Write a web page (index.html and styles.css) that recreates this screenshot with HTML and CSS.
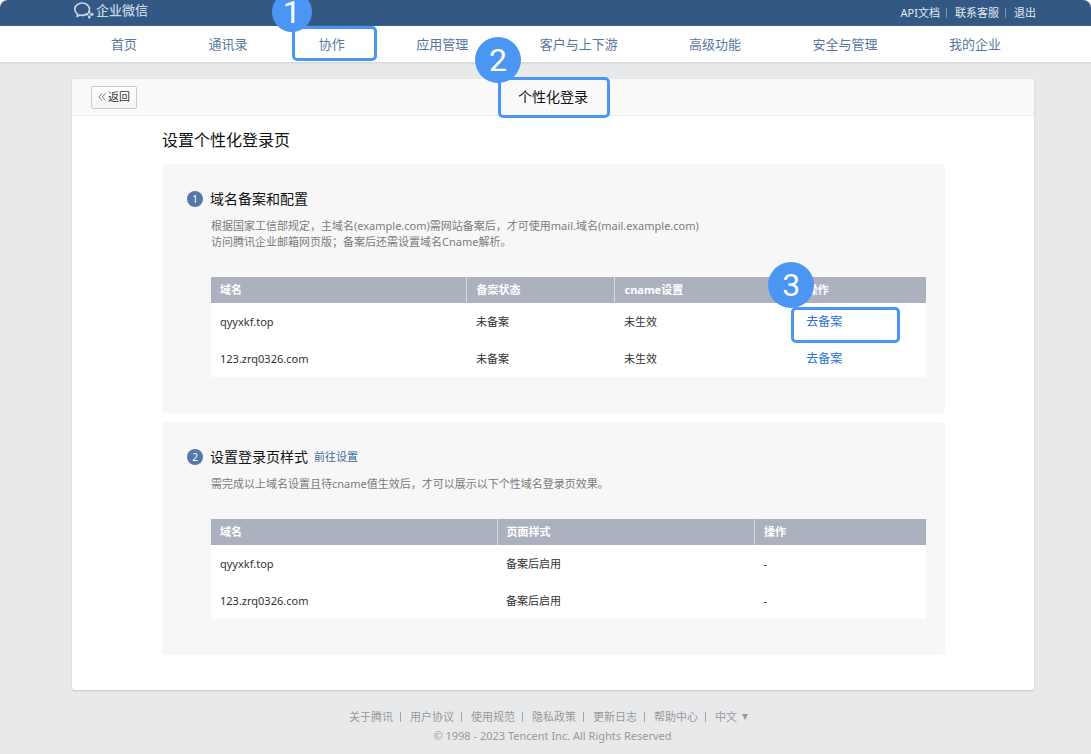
FILE: index.html
```html
<!DOCTYPE html>
<html lang="zh-CN">
<head>
<meta charset="utf-8">
<meta name="viewport" content="width=device-width, initial-scale=1">
<title>个性化登录</title>
<link rel="stylesheet" href="styles.css">
</head>
<body>
<div class="page">
  <header class="topbar">
    <a class="brand" href="#">
      <svg class="brand-icon" viewBox="0 0 22 18" aria-hidden="true">
        <path d="M16.5 8.4C16.4 4.6 13.2 2 9.2 2 5.100 2 1.800 4.800 1.800 8.200c0 2 1 3.600 2.700 4.800L4.100 15.400l2.700-1.400c1.700.5 3.500.5 5-.1" fill="none" stroke="currentColor" stroke-width="1.700" stroke-linecap="round" stroke-linejoin="round"/>
        <g fill="currentColor"><ellipse cx="16.200" cy="10.900" rx="1.300" ry="1.800"/><ellipse cx="18.900" cy="13.400" rx="1.800" ry="1.300"/><ellipse cx="16.300" cy="16" rx="1.300" ry="1.800"/><ellipse cx="13.700" cy="13.300" rx="1.800" ry="1.300"/></g>
      </svg>
      <span>企业微信</span>
    </a>
    <nav class="account" aria-label="账号">
      <a href="#">API文档</a><i class="bar"></i><a href="#">联系客服</a><i class="bar"></i><a href="#">退出</a>
    </nav>
  </header>
  <nav class="mainnav" aria-label="主导航">
    <a href="#">首页</a>
    <a href="#">通讯录</a>
    <a href="#" class="marked">协作<span class="frame frame-nav"><b class="badge badge-small">1</b></span></a>
    <a href="#">应用管理</a>
    <a href="#">客户与上下游</a>
    <a href="#">高级功能</a>
    <a href="#">安全与管理</a>
    <a href="#">我的企业</a>
  </nav>

  <main class="card">
    <div class="card-head">
      <button class="back" type="button"><svg viewBox="0 0 8 8" aria-hidden="true"><path d="M4 .5.800 4 4 7.500M7.500.5 4.300 4l3.200 3.500" fill="none" stroke="#777"/></svg>返回</button>
      <h1 class="card-title marked">个性化登录<span class="frame frame-title"><b class="badge">2</b></span></h1>
    </div>
    <div class="card-body">
      <h2 class="page-title">设置个性化登录页</h2>

      <section class="step">
        <h3 class="step-title"><span class="num">1</span>域名备案和配置</h3>
        <div class="step-body">
          <p class="note">根据国家工信部规定，主域名(example.com)需网站备案后，才可使用mail.域名(mail.example.com)<br>访问腾讯企业邮箱网页版；备案后还需设置域名Cname解析。</p>
          <table class="grid">
            <colgroup><col class="c-domain"><col class="c-status"><col class="c-cname"><col></colgroup>
            <thead><tr><th>域名</th><th>备案状态</th><th>cname设置</th><th>操作</th></tr></thead>
            <tbody>
              <tr><td>qyyxkf.top</td><td>未备案</td><td>未生效</td><td><a class="action marked" href="#">去备案<span class="frame frame-action"><b class="badge">3</b></span></a></td></tr>
              <tr><td>123.zrq0326.com</td><td>未备案</td><td>未生效</td><td><a class="action" href="#">去备案</a></td></tr>
            </tbody>
          </table>
        </div>
      </section>

      <section class="step">
        <h3 class="step-title"><span class="num">2</span>设置登录页样式<a class="setup" href="#">前往设置</a></h3>
        <div class="step-body">
          <p class="note">需完成以上域名设置且待cname值生效后，才可以展示以下个性域名登录页效果。</p>
          <table class="grid">
            <colgroup><col class="c-site"><col class="c-style"><col></colgroup>
            <thead><tr><th>域名</th><th>页面样式</th><th>操作</th></tr></thead>
            <tbody>
              <tr><td>qyyxkf.top</td><td>备案后启用</td><td>-</td></tr>
              <tr><td>123.zrq0326.com</td><td>备案后启用</td><td>-</td></tr>
            </tbody>
          </table>
        </div>
      </section>
    </div>
  </main>

  <footer class="footer">
    <div class="links">
      <a href="#">关于腾讯</a><i class="bar"></i><a href="#">用户协议</a><i class="bar"></i><a href="#">使用规范</a><i class="bar"></i><a href="#">隐私政策</a><i class="bar"></i><a href="#">更新日志</a><i class="bar"></i><a href="#">帮助中心</a><i class="bar"></i><button class="lang" type="button">中文<svg viewBox="0 0 6 6" aria-hidden="true"><path d="M0 0h6L3 6z" fill="currentColor"/></svg></button>
    </div>
    <p class="copyright">© 1998 - 2023 Tencent Inc. All Rights Reserved</p>
  </footer>
</div>
</body>
</html>
```

FILE: styles.css
```css
* { box-sizing: border-box; }
body {
  margin: 0;
  background: #fff;
  color: #333;
  font: 11px/16px "Noto Sans", "Noto Sans CJK SC", sans-serif;
}
a { color: inherit; text-decoration: none; }
h1, h2, h3, p { margin: 0; font-weight: 400; }
button { font: inherit; color: inherit; cursor: pointer; }

.page {
  min-height: 100vh;
  background: #e8e9eb;
  border-radius: 8px 8px 0 0;
  overflow: hidden;
}

.topbar {
  display: flex;
  justify-content: space-between;
  height: 26px;
  padding: 0 55px 0 73px;
  background: #325883;
  color: #e3eaf2;
}
.brand { display: flex; align-items: center; gap: 1px; height: 20px; font-size: 13px; font-weight: 500; color: #c9d6e4; }
.brand-icon { width: 22px; height: 18px; }
.account { display: flex; align-items: center; }
.account .bar { width: 1px; height: 10px; margin: 0 8px 0 6px; background: #7c96b2; }

.mainnav {
  display: flex;
  justify-content: space-between;
  align-items: center;
  height: 36px;
  padding: 0 90px 0 111px;
  background: #fff;
  box-shadow: 0 1px 2px #cfd0d2;
  color: #57779f;
  font-size: 13px;
}

.marked { position: relative; }
.frame {
  position: absolute;
  border: 3px solid #4b96f3;
  border-radius: 5px;
  z-index: 2;
}
.frame-nav { inset: -10px -32px -9px -27px; }
.frame-title { inset: -10px -22px -11px -20px; }
.frame-action { inset: -7px -58px -13px -15px; }
.badge {
  position: absolute;
  left: -26px;
  bottom: 32px;
  display: flex;
  align-items: center;
  justify-content: center;
  width: 46px;
  height: 46px;
  border-radius: 50%;
  background: #4b96f3;
  color: #fff;
  font: 400 32px/24px Roboto, sans-serif;
}
.badge-small { left: -23px; bottom: 26px; width: 40px; height: 40px; }

.card {
  margin: 17px 57px 0 72px;
  background: #fff;
  border-radius: 3px;
  box-shadow: 0 1px 2px #c4c5c8;
}
.card-head {
  display: grid;
  grid-template-columns: 1fr auto 1fr;
  align-items: center;
  height: 37px;
  padding: 0 19px;
  background: #f9f9f9;
  border-bottom: 1px solid #ececec;
  border-radius: 3px 3px 0 0;
}
.back {
  justify-self: start;
  display: flex;
  align-items: center;
  gap: 2px;
  height: 23px;
  padding: 0 6px;
  border: 1px solid #c9c9c9;
  border-radius: 2px;
  background: linear-gradient(#fff, #f4f4f4);
}
.back svg { width: 8px; height: 8px; }
.card-title { font-size: 14px; line-height: 20px; color: #111; }
.card-body { padding: 12px 89px 35px 90px; }
.page-title { font-size: 16px; line-height: 24px; color: #111; }

.step {
  margin-top: 12px;
  padding: 24px 19px 36px 25px;
  background: #f7f7f7;
  border-radius: 4px;
}
.step + .step { margin-top: 9px; }
.step-title { display: flex; align-items: center; font-size: 14px; line-height: 22px; color: #111; }
.num {
  display: flex;
  align-items: center;
  justify-content: center;
  width: 16px;
  height: 16px;
  margin-right: 7px;
  border-radius: 50%;
  background: #5577a9;
  color: #fff;
  font-size: 10px;
}
.setup { margin-left: 6px; font-size: 11px; color: #3d6a95; }
.step-body { padding-left: 24px; }
.note { margin-top: 8px; color: #7b7b7b; }

.grid {
  width: 100%;
  margin-top: 27px;
  border-collapse: collapse;
  table-layout: fixed;
  background: #fff;
}
.c-domain { width: 35.8%; }
.c-status { width: 20.7%; }
.c-cname { width: 25.5%; }
.c-site { width: 40%; }
.c-style { width: 36%; }
.grid th {
  height: 26px;
  padding: 0 9px;
  background: #abb1bf;
  color: #fff;
  text-align: left;
  font-weight: 700;
}
.grid th + th { border-left: 1px solid #d7dae1; }
.grid td { height: 37px; padding: 0 9px; }
.action { display: inline-block; font-size: 12px; color: #2b72d6; }

.footer { padding: 19px 0 10px 6px; text-align: center; color: #999; }
.links { display: flex; justify-content: center; align-items: center; margin-bottom: 3px; }
.links .bar { width: 1px; height: 10px; margin: 0 9px 0 7px; background: #a6a6a6; }
.lang { display: flex; align-items: center; gap: 5px; padding: 0; border: 0; background: none; }
.lang svg { width: 6px; height: 6px; }
.copyright { padding-left: 8px; }
```
